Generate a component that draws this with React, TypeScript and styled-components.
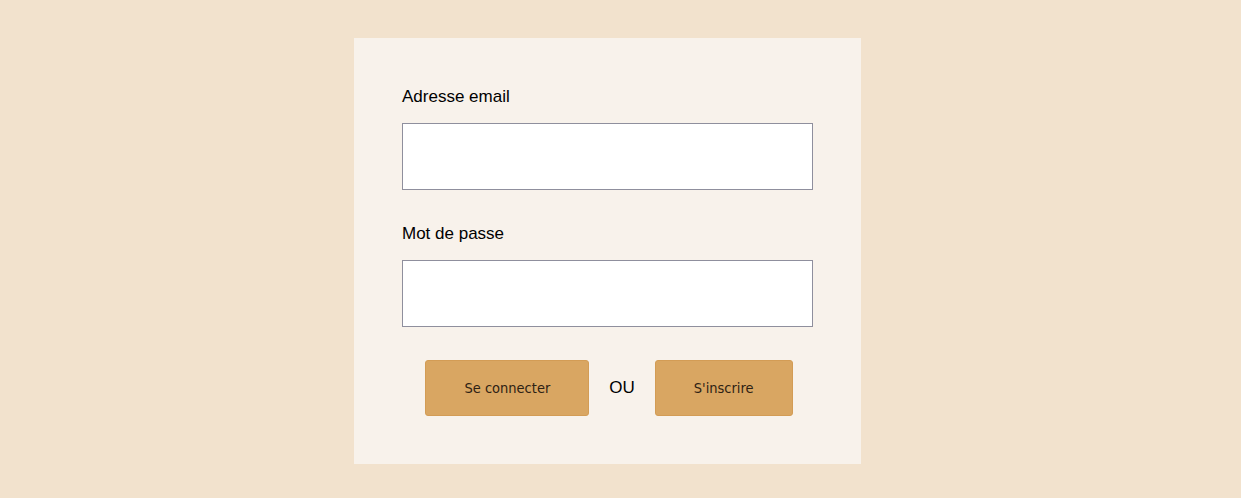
import React from "react";
import styled, { createGlobalStyle } from "styled-components";

const Global = createGlobalStyle`
  html, body { margin: 0; padding: 0; background: #f2e2cd; }
  body { font-family: "Liberation Sans", Arial, sans-serif; }
`;

const Page = styled.div`
  display: flex;
  justify-content: center;
  align-items: flex-start;
  padding: 38px 26px 0 0;
  min-height: 498px;
  box-sizing: border-box;
`;

const Card = styled.form`
  width: 507px;
  box-sizing: border-box;
  background: #f8f2eb;
  padding: 49px 48px 48px;
  display: flex;
  flex-direction: column;
`;

const Field = styled.div<{ $gap?: number }>`
  display: flex;
  flex-direction: column;
  margin-bottom: ${(p) => p.$gap ?? 34}px;
`;

const Label = styled.label`
  font-size: 17px;
  line-height: 20px;
  color: #000;
  margin-bottom: 16px;
`;

const Input = styled.input`
  width: 411px;
  height: 67px;
  box-sizing: border-box;
  border: 1px solid #8f8f9d;
  background: #fff;
  margin: 0;
  padding: 0 8px;
  font-size: 16px;
`;

const Actions = styled.div`
  display: flex;
  justify-content: center;
  align-items: center;
  gap: 20px;
  padding-left: 3px;
`;

const Button = styled.button`
  height: 56px;
  padding: 0 38px;
  background: #d9a662;
  border: 1px solid #d39c55;
  border-radius: 3px;
  font-family: "DejaVu Sans Condensed", "DejaVu Sans", Verdana, sans-serif;
  font-stretch: condensed;
  font-size: 14.5px;
  color: #2e2214;
  cursor: pointer;
`;

const Or = styled.span`
  font-size: 17px;
  color: #000;
`;

export default function App() {
  return (
    <>
      <Global />
      <Page>
        <Card onSubmit={(e) => e.preventDefault()}>
          <Field>
            <Label htmlFor="email">Adresse email</Label>
            <Input id="email" type="email" />
          </Field>
          <Field $gap={33}>
            <Label htmlFor="pwd">Mot de passe</Label>
            <Input id="pwd" type="password" />
          </Field>
          <Actions>
            <Button type="button">Se connecter</Button>
            <Or>OU</Or>
            <Button type="button">S'inscrire</Button>
          </Actions>
        </Card>
      </Page>
    </>
  );
}
